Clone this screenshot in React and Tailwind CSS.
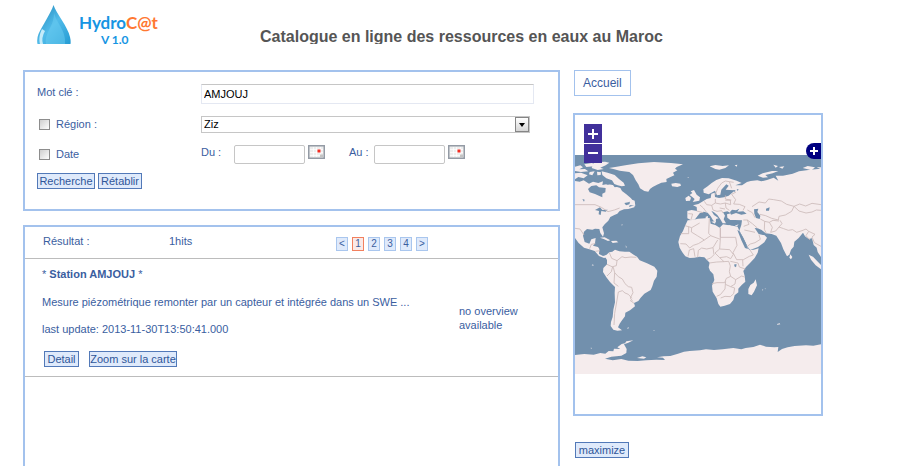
import React, { useState } from 'react';

const pages = ['<', '1', '2', '3', '4', '>'];

const buttonStyle =
  'h-4 border border-[#5279b8] bg-[#dfeafb] text-center text-[11px] leading-[14px] whitespace-nowrap text-[#2f5699]';
const dateStyle =
  'h-[19px] w-[71px] rounded-[2px] border border-[#c6c6c6] bg-white px-1 text-[11px] text-black outline-none';
const checkStyle =
  'm-0 h-[11px] w-[11px] shrink-0 appearance-none border border-[#8d8d8d] bg-linear-to-br from-[#cfcfcf] to-white checked:bg-[#5279b8]';

function DropLogo() {
  return (
    <svg viewBox="0 0 34 39" className="h-[39px] w-[34px] shrink-0" aria-hidden="true">
      <defs>
        <linearGradient id="drop" x1="0" y1="0" x2="1" y2="1">
          <stop offset="0" stopColor="#1d84b8" />
          <stop offset="0.5" stopColor="#51bbe9" />
          <stop offset="1" stopColor="#249bd3" />
        </linearGradient>
      </defs>
      <path d="M16.500 0 C19 8 31 22 33 32 Q34 36 33.500 39 H0.500 Q-0.500 34 1.500 29 C5 21 14 8 16.500 0Z" fill="url(#drop)" />
      <path d="M5 24 C2 30 2 35 3 39 H6 Q4 33 8 26Z" fill="#c5ebf9" />
      <path d="M17 8 C20 19 29 25 28 39 H9 C7 28 17 22 17 8Z" fill="#6bcdf1" opacity="0.5" />
    </svg>
  );
}

function CalendarIcon() {
  return (
    <svg viewBox="0 0 17 14" className="h-3.5 w-[17px]" aria-hidden="true">
      <rect x="0.750" y="0.750" width="15.500" height="12.500" fill="#ededed" stroke="#949ba5" strokeWidth="1.500" />
      <path d="M2 4.500H15M2 7.500H15M2 10.500H15M5.500 2V12M8.500 2V12M12.500 2V12" stroke="#fff" strokeWidth="0.700" />
      <rect x="9.500" y="4.500" width="3" height="3" fill="#f32b20" />
      <rect x="12" y="9.500" width="3" height="2.500" fill="#c3c3c3" />
    </svg>
  );
}

function WorldMap() {
  return (
    <svg viewBox="0 0 738 657" className="block w-full bg-[#7290ad]" role="img" aria-label="Carte du monde">
      <g fill="#f5eced">
        {/* North America */}
        <path d="M0 78 L14 80 26 76 42 86 54 80 70 84 84 79 82 90 94 88 110 89 116 97 126 96 136 99 141 108 154 118 168 130 173 137 160 142 148 144 153 151 166 147 162 156 180 150 178 157 160 162 147 163 134 168 127 176 118 180 106 186 100 197 89 208 82 217 87 235 84 245 76 234 73 222 60 221 52 224 36 222 27 230 24 242 29 261 43 266 49 253 62 249 60 265 54 272 69 276 73 282 72 297 84 303 95 300 99 306 87 309 72 303 59 288 43 283 27 278 11 264 0 249Z" />
        <path d="M0 35 L16 31 24 37 13 43 30 42 40 49 18 51 0 48Z M28 28 L50 24 64 28 56 34 34 36Z M58 22 L90 20 103 23 92 31 76 38 86 42 68 45 50 39Z M0 55 L18 53 38 61 26 70 10 66 0 73Z M44 51 L59 49 52 61 42 58Z M66 50 L78 52 77 60 67 61Z M80 49 L98 53 119 60 132 72 146 83 150 92 140 94 128 91 118 87 111 76 94 70 82 60Z M102 91 L114 90 120 98 109 101Z M166 132 L179 137 181 152 163 150Z" />
        <path d="M102 39 L125 35 151 31 190 25 237 21 288 24 324 28 305 36 300 41 307 46 294 53 298 61 285 67 274 72 275 81 259 83 246 89 233 96 225 102 220 110 208 108 195 100 190 88 182 76 174 60 163 51 134 47 118 43Z M289 86 L302 84 316 86 318 92 307 96 291 94Z" />
        <path d="M75 248 L89 247 106 256 99 258 86 252Z M108 258 L124 257 130 262 113 264Z" />

        {/* South America */}
        <path d="M89 304 L103 292 112 290 120 284 133 289 150 290 163 290 176 299 186 305 194 316 216 325 238 335 247 347 245 365 237 377 232 394 227 405 208 416 197 428 190 438 177 444 180 454 165 466 151 473 150 484 140 497 134 506 129 517 141 526 127 527 115 524 107 513 108 501 113 486 115 464 120 442 119 414 120 396 105 381 94 367 84 351 85 339 96 328 96 315Z" />

        {/* Africa */}
        <path d="M338 196 L352 195 369 191 391 190 404 189 407 206 421 210 434 218 444 208 461 211 477 213 488 215 493 228 501 246 509 260 516 275 523 285 536 284 551 280 548 293 539 309 525 324 513 336 505 348 509 363 511 380 500 390 490 401 490 412 479 421 475 435 465 447 449 452 436 455 430 447 425 430 413 410 411 392 418 375 415 358 405 347 401 337 404 323 396 315 388 307 373 305 358 308 344 309 331 304 322 292 314 278 310 261 315 243 324 228 330 213Z M542 373 L546 391 537 410 530 421 520 417 520 402 526 390 536 383Z" />

        {/* Eurasia */}
        <path d="M337 168 L350 165 366 168 365 156 354 151 370 147 384 139 395 132 407 129 409 116 419 113 420 126 432 129 447 127 461 122 468 116 480 106 464 105 452 104 461 92 454 88 439 104 436 119 426 121 420 107 401 118 386 113 385 103 398 94 410 84 424 75 441 69 461 70 485 77 500 84 481 91 501 91 516 81 527 78 547 76 559 79 576 75 596 68 610 77 602 62 624 62 653 56 672 49 706 44 738 41 738 306 728 291 725 278 716 270 711 250 701 252 690 244 684 233 671 249 658 260 656 275 648 284 643 299 636 304 625 283 618 264 604 242 590 237 572 235 560 225 548 220 539 219 551 237 569 241 576 248 568 262 549 276 525 285 517 274 505 248 493 227 499 210 501 196 480 195 466 195 457 188 456 178 468 175 457 169 444 172 450 182 446 193 453 205 443 205 435 191 427 180 417 172 409 167 417 180 431 190 423 192 422 202 414 196 407 184 398 173 386 170 374 175 367 184 359 194 347 195 337 190Z" />
        <path d="M344 120 L352 114 347 109 357 105 365 119 375 127 373 137 353 141 359 132 351 125Z M331 129 L341 122 348 128 345 137 333 138Z M392 185 L399 183 398 195 392 194Z M409 200 L423 198 420 206Z M455 212 L467 210 465 214Z M479 212 L491 208 486 214Z M646 298 L652 306 648 313 643 308Z" />
        <path d="M404 34 L421 30 443 33 462 31 451 39 433 44 421 42Z M479 31 L487 29 485 35Z M548 62 L563 55 591 48 610 48 593 55 571 60 579 67 564 68Z M595 29 L609 33 602 38Z M612 36 L628 34 622 41Z M683 39 L698 33 720 37 710 46Z M725 37 L738 37 738 43Z" />
        <path d="M701 299 L714 305 730 322 738 330 738 343 722 331 708 314Z" />

        {/* Antarctica */}
        <path d="M0 600 L28 597 56 599 76 594 91 596 101 588 115 589 117 581 136 582 127 577 140 567 150 565 154 559 175 556 160 563 147 568 155 582 154 594 139 602 109 605 90 611 113 616 139 612 160 617 188 618 214 616 244 614 270 615 264 608 246 607 266 604 286 603 309 596 327 590 344 588 375 586 393 583 417 585 443 583 475 579 499 583 512 579 535 576 555 569 573 575 598 577 610 576 608 591 621 582 638 577 659 573 693 571 715 572 738 568 738 657 0 657Z M186 609 L202 604 214 607 207 611Z" />
        <path d="M50 331l4-3 2 4zM156 520l5-4-1 5zM235 526l4-1-2 3zM606 507l8-2 2 3-9 1zM561 404l4-1-3 4zM569 401l3-1-1 3zM139 209l4-1-2 4zM337 67l4-1-1 3zM47 578l5 1-4 2zM152 271l3 5-2 3z" />
      </g>

      {/* inland water */}
      <g fill="#7290ad">
        <path d="M39 102 L49 93 64 91 72 97 92 99 91 112 82 116 82 127 75 124 60 117 44 112Z M95 78 L108 83 99 89 86 85Z M60 165 L75 157 82 165 98 164 92 170 79 168 77 180 71 178 72 168Z M22 132 L29 134 27 140Z" />
        <path d="M465 171 L471 164 483 166 493 161 487 170 505 169 515 176 499 179 483 174 468 179Z M537 163 L550 161 547 171 556 182 554 192 543 189 538 176Z M573 161 L584 157 582 167 573 167Z M478 328 L485 328 483 337 478 334Z M474 107 L481 105 480 111Z M485 103 L491 103 488 108Z M487 225 L493 228 512 263 519 282 510 279 499 256Z" />
      </g>

      {/* country borders */}
      <g fill="none" stroke="#cbbab9" strokeWidth="2.500" strokeLinejoin="round">
        <path d="M0 149H60L79 157 99 170 118 165 134 159 M0 220L15 222 27 240 M44 281L49 268 61 266 M61 289L75 287" />
        <path d="M103 293L110 310 126 317 124 332 113 335 109 350 96 363 M126 317L141 305 150 308 168 306 184 307 M96 328L115 337 119 353 130 365 142 372 150 386 160 395 170 397 174 413 166 429 173 439 M119 353L117 384 130 394 M130 411L142 407 150 414 160 418 171 430 M130 411L124 447 119 475 117 510 M165 436L177 445" />
        <path d="M330 212L350 218 349 231 367 242 388 255 407 242 436 253 436 218 M350 218L374 204 M403 190L401 235 407 242 M436 218V247H482 M317 236H341V215 M316 266L333 267 344 279 355 271 370 266 388 255 M339 304L343 285 356 281 360 305 M368 307L370 286 380 279 395 282 414 278 428 255 M414 278L417 299 407 309 394 314 M436 253L434 282 420 294 434 308 455 305 467 311 475 298 464 284 434 282 M482 247L486 271 474 293 485 314 505 314 523 304 535 300 525 285 M403 324L425 321 447 320 461 319 466 333 463 350 467 364 454 370 449 383 426 383 411 386 M447 320L434 308 M467 364L482 374 500 363 509 366 M482 374L480 387 467 395 451 388 450 402 436 419 425 424 M451 388L452 379 M467 395L479 399 476 416 466 425 450 424 437 429 M466 319L489 324 493 336 511 342 M503 315L504 334" />
        <path d="M340 176L353 177 348 194 M365 168L385 173 M375 150L385 159 394 171 M388 139L395 149 410 151 421 144 436 147 451 144 467 149 466 135 451 132 451 121 M410 151L414 165 426 169 440 167 444 174 M421 132L421 144 M451 144L453 159 463 166 M421 119L428 100 440 84 451 78 463 80 476 82 M463 80L470 100 M483 111L470 118 482 134 476 147 493 148 510 155 504 166 M434 159L450 162 M469 135L451 136" />
        <path d="M531 155L552 141 571 144 581 132 596 134 619 138 635 148 657 154 674 147 692 153 711 145 738 149 M657 154L672 168 693 174 711 171 724 165 738 166 M555 178L572 182 590 190 610 195 612 184 631 180 650 169 657 154 M556 192L569 199 583 202 594 196 612 198 M569 199L568 223 574 235 M583 202L592 217 587 232 602 228 612 216 621 206 615 196 M612 216L626 221 640 226 653 224 665 232 681 227 693 222 701 229 693 242 705 255 M701 229L720 238 711 246 718 263 738 274 M505 195L517 195 522 208 506 214 M517 195L532 206 547 219 M517 165L532 173 540 188 M508 225L522 228 540 232 M552 239L556 253 540 263 526 267 517 274" />
      </g>
    </svg>
  );
}

function SearchForm() {
  const [form, setForm] = useState({
    keyword: 'AMJOUJ',
    region: 'Ziz',
    from: '',
    to: '',
  });

  const handleChange = (e) => {
    setForm({ ...form, [e.target.name]: e.target.value });
  };

  const handleSubmit = (e) => {
    e.preventDefault();
  };

  return (
    <form onSubmit={handleSubmit} className="border-2 border-[#a3c2ed] px-3 pt-3 pb-5">
      <div className="grid grid-cols-[164px_1fr] gap-y-3 pr-3">
        <label htmlFor="keyword" className="leading-4">Mot clé :</label>
        <input
          id="keyword"
          name="keyword"
          value={form.keyword}
          onChange={handleChange}
          className="h-5 w-full min-w-0 border border-[#e4e8f2] border-t-[#c6c6c6] px-0.5 text-[11px] text-black outline-none"
        />

        <div className="flex items-center gap-1.5 pl-0.5">
          <input id="useRegion" type="checkbox" className={checkStyle} />
          <label htmlFor="useRegion">Région :</label>
        </div>
        <div className="relative mr-1">
          <select
            name="region"
            aria-label="Région"
            value={form.region}
            onChange={handleChange}
            className="block h-[17px] w-full appearance-none border border-[#c6c6c6] bg-white px-0.5 text-[11px] leading-[15px] text-black outline-none"
          >
            <option>Ziz</option>
            <option>Rheris</option>
          </select>
          <span className="pointer-events-none absolute top-px right-px flex h-[15px] w-3.5 items-center justify-center border border-[#858585] bg-linear-to-b from-white to-[#d5d5d5]">
            <svg viewBox="0 0 6 4" className="h-1 w-1.5"><path d="M0 0H6L3 4Z" fill="#000" /></svg>
          </span>
        </div>

        <div className="flex items-center gap-1.5 pl-0.5">
          <input id="useDate" type="checkbox" className={checkStyle} />
          <label htmlFor="useDate">Date</label>
        </div>
        <div className="flex items-start">
          <label htmlFor="from" className="w-[33px] leading-[14px]">Du :</label>
          <input id="from" name="from" value={form.from} onChange={handleChange} className={dateStyle} />
          <button type="button" aria-label="Date de début" className="ml-[3px]"><CalendarIcon /></button>
          <label htmlFor="to" className="ml-6 w-[25px] leading-[14px]">Au :</label>
          <input id="to" name="to" value={form.to} onChange={handleChange} className={dateStyle} />
          <button type="button" aria-label="Date de fin" className="ml-[3px]"><CalendarIcon /></button>
        </div>
      </div>

      <div className="mt-[9px] flex gap-[3px]">
        <button type="submit" className={`${buttonStyle} w-[58px]`}>Recherche</button>
        <button type="reset" className={`${buttonStyle} w-11`}>Rétablir</button>
      </div>
    </form>
  );
}

function Results() {
  const [page, setPage] = useState('1');

  return (
    <section className="flex-1 border-2 border-b-0 border-[#a3c2ed]">
      <div className="flex h-8 items-start border-b border-[#bcbcbc] pt-1.5 pl-[18px]">
        <span className="w-[126px] leading-4">Résultat :</span>
        <span className="w-[167px] leading-4">1hits</span>
        <nav className="flex gap-1 pt-1">
          {pages.map((p) => (
            <button
              key={p}
              onClick={() => setPage(p)}
              className={`h-3.5 w-3 border text-center text-[10px] leading-3 ${
                p === page ? 'border-[#f2805e] bg-[#fbe9e6]' : 'border-[#a9c6ee] bg-[#dfeafb]'
              }`}
            >
              {p}
            </button>
          ))}
        </nav>
      </div>

      <article className="flex border-b border-[#bcbcbc] pt-[7px] pr-3 pb-[9px] pl-[17px]">
        <div className="flex-1">
          <h2 className="leading-4">* <b>Station AMJOUJ</b> *</h2>
          <p className="mt-3 leading-4">
            Mesure piézométrique remonter par un capteur et intégrée dans un SWE ...
          </p>
          <p className="mt-[11px] leading-4">last update: 2013-11-30T13:50:41.000</p>
          <div className="mt-3.5 flex gap-2.5 pl-0.5">
            <button className={`${buttonStyle} w-[35px]`}>Detail</button>
            <button className={`${buttonStyle} w-[88px]`}>Zoom sur la carte</button>
          </div>
        </div>
        <p className="w-[87px] pt-[38px] leading-[14px]">no overview<br />available</p>
      </article>
    </section>
  );
}

function MapPanel() {
  return (
    <aside className="flex flex-col items-start">
      <a href="#accueil" className="ml-px border border-[#a3c2ed] px-2 text-[12px] leading-6">Accueil</a>
      <div className="relative mt-[17px] w-full border-2 border-[#a3c2ed] pt-10 pb-10">
        <WorldMap />
        <div className="absolute top-[9px] left-[9px] flex flex-col gap-px">
          <button aria-label="Zoom avant" className="flex h-[19px] w-[18px] items-center justify-center bg-[#41309b]">
            <svg viewBox="0 0 10 10" className="h-2.5 w-2.5"><path d="M5 0V10M0 5H10" stroke="#fff" strokeWidth="2" /></svg>
          </button>
          <button aria-label="Zoom arrière" className="flex h-[19px] w-[18px] items-center justify-center bg-[#41309b]">
            <svg viewBox="0 0 10 10" className="h-2.5 w-2.5"><path d="M0 4H10" stroke="#fff" strokeWidth="2" /></svg>
          </button>
        </div>
        <button aria-label="Couches" className="absolute top-7 right-0 flex h-4 w-[15px] items-center justify-center rounded-l-full bg-[#000080]">
          <svg viewBox="0 0 8 8" className="h-2 w-2"><path d="M4 0V8M0 4H8" stroke="#fff" strokeWidth="2" /></svg>
        </button>
      </div>
      <button className={`${buttonStyle} mt-[26px] ml-0.5 w-[54px]`}>maximize</button>
    </aside>
  );
}

export default function App() {
  return (
    <div className="flex h-screen flex-col overflow-hidden bg-white font-['Liberation_Sans',Arial,sans-serif] text-[11px] text-[#3a5e9f]">
      <header className="flex h-11 shrink-0 items-start pt-[5px] pl-[37px]">
        <DropLogo />
        <div className="ml-2 w-[181px] pt-[7px] font-['Lato',sans-serif] font-bold text-[#1695e3]">
          <p className="text-[17px] leading-[21px]">Hydro<span className="text-[#ff7832]">C@t</span></p>
          <p className="pl-[22px] text-[12px] leading-[14px]">V 1.0</p>
        </div>
        <h1 className="h-[39px] overflow-hidden pt-[22px] text-[16px] leading-5 font-bold text-[#555]">
          Catalogue en ligne des ressources en eaux au Maroc
        </h1>
      </header>

      <main className="mt-[26px] grid flex-1 grid-cols-[1fr_250px] gap-x-[13px] pr-[79px] pl-[23px]">
        <div className="flex flex-col gap-3.5">
          <SearchForm />
          <Results />
        </div>
        <MapPanel />
      </main>
    </div>
  );
}
